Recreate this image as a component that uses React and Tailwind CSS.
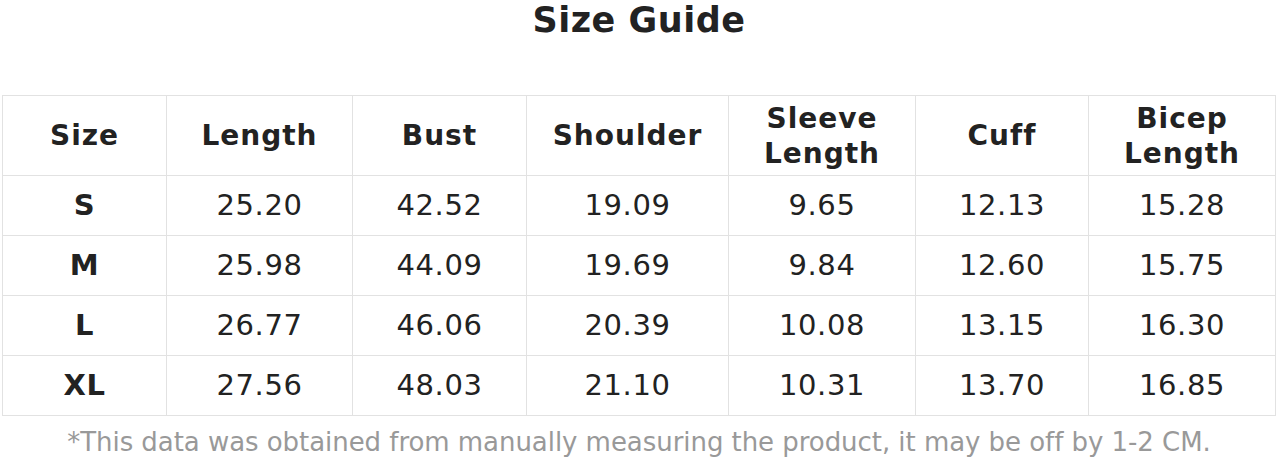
import React from 'react'

const headers = ['Size', 'Length', 'Bust', 'Shoulder', ['Sleeve', 'Length'], 'Cuff', ['Bicep', 'Length']]
const widths = ['w-[164px]', 'w-[186px]', 'w-[174px]', 'w-[202px]', 'w-[187px]', 'w-[173px]', 'w-[187px]']

const rows = [
    ['S', '25.20', '42.52', '19.09', '9.65', '12.13', '15.28'],
    ['M', '25.98', '44.09', '19.69', '9.84', '12.60', '15.75'],
    ['L', '26.77', '46.06', '20.39', '10.08', '13.15', '16.30'],
    ['XL', '27.56', '48.03', '21.10', '10.31', '13.70', '16.85'],
]

const App = () => {
    return (
        <div className="w-[1278px] h-[458px] bg-white font-['DejaVu_Sans',sans-serif] text-[#222]">
            <h1 className="text-[35px] leading-[40px] font-bold text-center tracking-[0.5px]">Size Guide</h1>

            <div className="pl-[2px] mt-[55px]">
                <table className="border-collapse table-fixed w-[1273px]">
                    <thead>
                        <tr className="h-[80px]">
                            {headers.map((h, i) => (
                                <th
                                    key={i}
                                    className={`${widths[i]} border border-[#e2e2e2] text-[28px] leading-[35px] font-bold tracking-[1px] text-center align-middle`}
                                >
                                    {Array.isArray(h) ? (
                                        <>
                                            {h[0]}
                                            <br />
                                            {h[1]}
                                        </>
                                    ) : h}
                                </th>
                            ))}
                        </tr>
                    </thead>
                    <tbody>
                        {rows.map((r) => (
                            <tr key={r[0]} className="h-[60px]">
                                {r.map((c, i) => (
                                    <td
                                        key={i}
                                        className={`border border-[#e2e2e2] text-center align-middle text-[29px] tracking-[0.6px] ${i === 0 ? 'font-bold' : ''}`}
                                    >
                                        {c}
                                    </td>
                                ))}
                            </tr>
                        ))}
                    </tbody>
                </table>
            </div>

            <p className="text-center text-[26px] leading-[32px] text-[#999] mt-[10px] tracking-[-0.05px]">
                *This data was obtained from manually measuring the product, it may be off by 1-2 CM.
            </p>
        </div>
    )
}

export default App
